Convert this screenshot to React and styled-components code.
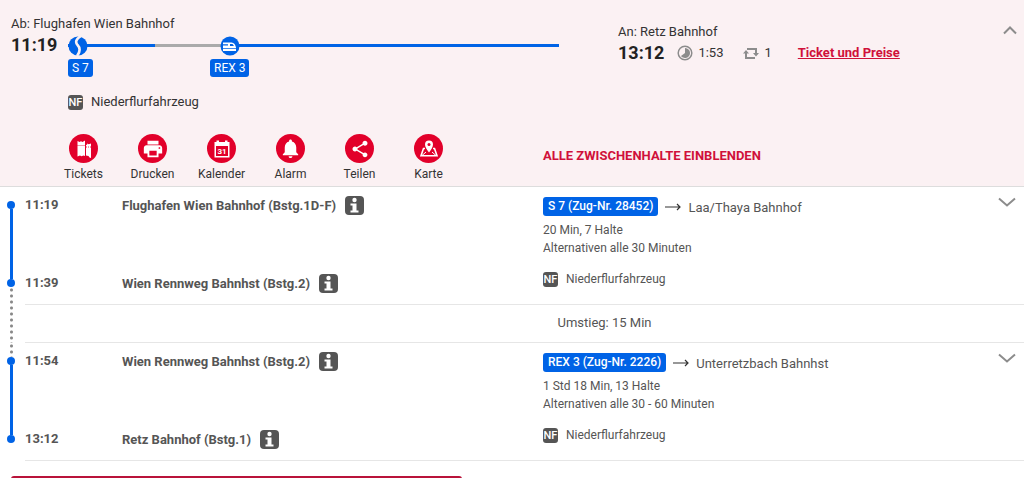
import { MdPrint, MdNotifications, MdShare } from 'react-icons/md'
import styled, { createGlobalStyle } from 'styled-components'

const actions = [
  { label: 'Tickets', icon: <TicketsIcon /> },
  { label: 'Drucken', icon: <MdPrint size={22} /> },
  { label: 'Kalender', icon: <CalendarIcon /> },
  { label: 'Alarm', icon: <MdNotifications size={23} /> },
  { label: 'Teilen', icon: <MdShare size={20} /> },
  { label: 'Karte', icon: <MapIcon /> },
]

const firstLeg = {
  stops: [
    { time: '11:19', name: 'Flughafen Wien Bahnhof (Bstg.1D-F)' },
    { time: '11:39', name: 'Wien Rennweg Bahnhst (Bstg.2)' },
  ],
  train: 'S 7 (Zug-Nr. 28452)',
  direction: 'Laa/Thaya Bahnhof',
  duration: '20 Min, 7 Halte',
  alternatives: 'Alternativen alle 30 Minuten',
}

const secondLeg = {
  stops: [
    { time: '11:54', name: 'Wien Rennweg Bahnhst (Bstg.2)' },
    { time: '13:12', name: 'Retz Bahnhof (Bstg.1)' },
  ],
  train: 'REX 3 (Zug-Nr. 2226)',
  direction: 'Unterretzbach Bahnhst',
  duration: '1 Std 18 Min, 13 Halte',
  alternatives: 'Alternativen alle 30 - 60 Minuten',
}

export default function App() {
  return (
    <>
      <GlobalStyle />
      <Summary>
        <Overview>
          <Departure>
            <Station>Ab: Flughafen Wien Bahnhof</Station>
            <Time>11:19</Time>
            <Track>
              <Ride $grow={87}>
                <Marker>
                  <SBahnIcon />
                  <Badge>S 7</Badge>
                </Marker>
              </Ride>
              <Change />
              <Ride $grow={349} $afterChange>
                <Marker $center>
                  <TrainIcon />
                  <Badge>REX 3</Badge>
                </Marker>
              </Ride>
            </Track>
            <SummaryNote>
              <LowFloor />
            </SummaryNote>
          </Departure>
          <Arrival>
            <span>An: Retz Bahnhof</span>
            <Facts>
              <Time>13:12</Time>
              <Fact><DurationIcon />1:53</Fact>
              <Fact $wide><ChangesIcon />1</Fact>
              <PriceLink href="#preise">Ticket und Preise</PriceLink>
            </Facts>
          </Arrival>
          <Toggle type="button" aria-label="Details ausblenden">
            <Chevron up />
          </Toggle>
        </Overview>
        <Tools>
          <ActionList>
            {actions.map(({ label, icon }) => (
              <Action key={label} type="button">
                <Round>{icon}</Round>
                {label}
              </Action>
            ))}
          </ActionList>
          <StopsButton type="button">ALLE ZWISCHENHALTE EINBLENDEN</StopsButton>
        </Tools>
      </Summary>
      <main>
        <Leg leg={firstLeg} hasChange />
        <Row>
          <Rail><Dots /></Rail>
          <Transfer>Umstieg: 15 Min</Transfer>
        </Row>
        <Leg leg={secondLeg} afterChange />
        <BuyButton type="button" aria-label="Ticket und Preise" />
      </main>
    </>
  )
}

function Leg({ leg, hasChange, afterChange }) {
  return (
    <Row>
      <Rail>
        <Lead>{afterChange && <Dots />}</Lead>
        <Dot />
        <Line />
        <Dot />
        <Tail>{hasChange && <Dots />}</Tail>
      </Rail>
      <LegBody>
        <Stops>
          {leg.stops.map((stop) => (
            <Stop key={stop.time}>
              <time>{stop.time}</time>
              <StopName>
                {stop.name}
                <InfoButton type="button" aria-label="Information">
                  <InfoIcon />
                </InfoButton>
              </StopName>
            </Stop>
          ))}
        </Stops>
        <Info>
          <Direction>
            <TrainBadge>{leg.train}</TrainBadge>
            <ArrowIcon />
            <Target>{leg.direction}</Target>
          </Direction>
          <p>{leg.duration}</p>
          <p>{leg.alternatives}</p>
          <LegNote>
            <LowFloor />
          </LegNote>
        </Info>
        <Toggle type="button" aria-label="Zwischenhalte einblenden">
          <Chevron />
        </Toggle>
      </LegBody>
    </Row>
  )
}

function LowFloor() {
  return (
    <Note>
      <Nf>NF</Nf>
      Niederflurfahrzeug
    </Note>
  )
}

function Chevron({ up }) {
  return (
    <svg width="18" height="10" viewBox="0 0 18 10" fill="none" stroke="#8c8c8c" strokeWidth="2">
      <path d={up ? 'M3 8.500l6-6 6 6' : 'M1 1.500l8 7 8-7'} />
    </svg>
  )
}

function SBahnIcon() {
  return (
    <svg width="20" height="20" viewBox="0 0 20 20">
      <circle cx="10" cy="10" r="9.500" fill="#0063e6" />
      <path d="M13 0C8 3 7 6 9.500 9C13 12.500 12 16 9 20" fill="none" stroke="#fbf1f3" strokeWidth="2.600" />
    </svg>
  )
}

function TrainIcon() {
  return (
    <svg width="20" height="20" viewBox="0 0 20 20">
      <circle cx="10" cy="10" r="9.500" fill="#0063e6" />
      <path d="M3 6.500h8.500c2.500 0 4 2.500 4.500 5v.7H3z" fill="#fff" />
      <path d="M3 13h13v2H3z" fill="#fff" />
      <path d="M3 8.300h5v1.200H3zM10 8h2.500l1.500 2h-4z" fill="#0063e6" />
    </svg>
  )
}

function DurationIcon() {
  return (
    <svg width="16" height="16" viewBox="0 0 16 16">
      <circle cx="8" cy="8" r="6.800" fill="none" stroke="#8c8c8c" strokeWidth="1.500" />
      <path d="M8 3a5 5 0 1 1-4 8l4-3z" fill="#8c8c8c" />
    </svg>
  )
}

function ChangesIcon() {
  return (
    <svg width="16" height="16" viewBox="0 0 16 16" fill="none" stroke="#8c8c8c" strokeWidth="2">
      <path d="M4 4h9v6M12 13H3V7" />
      <path d="M10 8h6l-3 3.500zM0 8.500h6L3 5z" fill="#8c8c8c" stroke="none" />
    </svg>
  )
}

function ArrowIcon() {
  return (
    <svg width="16" height="8" viewBox="0 0 16 8" fill="none" stroke="#333" strokeWidth="1.200">
      <path d="M0 4h15M12 1l3 3-3 3" />
    </svg>
  )
}

function InfoIcon() {
  return (
    <svg width="19" height="19" viewBox="0 0 19 19">
      <rect width="19" height="19" rx="4" fill="#555" />
      <circle cx="9.500" cy="4" r="2.200" fill="#fff" />
      <path d="M5.500 7.500h6v7h2v2h-8v-2h2v-5h-2z" fill="#fff" />
    </svg>
  )
}

function TicketsIcon() {
  return (
    <svg width="28" height="28" viewBox="0 0 28 28" fill="#fff">
      <path d="M7.500 6l2 1 1.500-.7 1.500.7L15 5.500V21l-1.500-.5-2 .8-1.500-.8-2.500 1z" />
      <path d="M16 10l1.200-.5V8.500l1.500.7 2.300-.7V23l-1.500-.5-1-1.500-2.500-.5z" />
      <path d="M7.500 10.500H15M16 12h5" stroke="#e2002a" strokeWidth=".8" strokeDasharray="1 1" />
    </svg>
  )
}

function CalendarIcon() {
  return (
    <svg width="28" height="28" viewBox="0 0 28 28">
      <path d="M6.500 7h2V5.500h2.500V7h6V5.500h2.500V7h2v15.500h-15z" fill="#fff" />
      <path d="M8 11h12v10H8z" fill="#e2002a" />
      <text x="14" y="19" textAnchor="middle" fontSize="8" fontWeight="700" fill="#fff">31</text>
    </svg>
  )
}

function MapIcon() {
  return (
    <svg width="28" height="28" viewBox="0 0 28 28">
      <path d="M10 13.500H8.500L6 20.800h16l-2.500-7.300H18" fill="none" stroke="#fff" strokeWidth="1.600" />
      <path d="M14 17.500c-2-3-4-5-4-8a4 4 0 0 1 8 0c0 3-2 5-4 8z" fill="#fff" />
      <path d="M7 20.500l4-3.500M21 20.500l-4-3.500" stroke="#fff" strokeWidth="1" />
      <circle cx="14" cy="9.500" r="1.500" fill="#e2002a" />
    </svg>
  )
}

const GlobalStyle = createGlobalStyle`
  * {
    box-sizing: border-box;
  }
  body {
    margin: 0;
    overflow: hidden;
    background: #fff;
    color: #333;
    font-family: Roboto, 'Liberation Sans', sans-serif;
    font-size: 13px;
    line-height: 18px;
  }
  button {
    padding: 0;
    border: 0;
    background: none;
    color: inherit;
    font: inherit;
    cursor: pointer;
  }
  p, ol {
    margin: 0;
    padding: 0;
    list-style: none;
  }
  svg {
    display: block;
    flex-shrink: 0;
  }
`

const Summary = styled.header`
  padding: 15px 0 3px 11px;
  background: #fbf1f3;
  border-bottom: 1px solid #ddd;
`

const Overview = styled.section`
  display: grid;
  grid-template-columns: 548fr 319fr 28px;
  column-gap: 59px;
`

const Departure = styled.div`
  display: grid;
  grid-template-columns: 57px 1fr;
`

const Station = styled.span`
  grid-column: 1 / -1;
`

const Time = styled.strong`
  font-size: 18px;
  font-weight: 700;
  line-height: 24px;
  color: #222;
`

const Track = styled.div`
  display: flex;
  padding-top: 3px;
`

const Ride = styled.div`
  flex: ${({ $grow }) => $grow} 1 0;
  min-width: 0;
  background: ${({ $afterChange }) =>
      $afterChange ? 'linear-gradient(90deg, #aaa 18px, #0063e6 18px)' : 'linear-gradient(#0063e6, #0063e6)'}
    0 8px / 100% 3px no-repeat;
`

const Change = styled.div`
  flex: 55 1 0;
  background: linear-gradient(#aaa, #aaa) 0 8px / 100% 3px no-repeat;
`

const Marker = styled.div`
  display: flex;
  flex-direction: column;
  align-items: ${({ $center }) => ($center ? 'center' : 'flex-start')};
  gap: 3px;
  width: fit-content;
`

const Badge = styled.span`
  padding: 0 4px;
  border-radius: 3px;
  background: #0063e6;
  color: #fff;
  font-size: 12px;
`

const TrainBadge = styled(Badge)`
  padding: 0 5px;
  font-weight: 500;
  line-height: 19px;
`

const SummaryNote = styled.div`
  grid-column: 2;
  padding-top: 16px;
`

const Note = styled.div`
  display: flex;
  align-items: center;
  gap: 8px;
`

const Nf = styled.span`
  width: 15px;
  height: 15px;
  border-radius: 3px;
  background: #555;
  color: #fff;
  font-size: 11px;
  font-weight: 500;
  line-height: 15px;
  text-align: center;
`

const Arrival = styled.div`
  display: flex;
  flex-direction: column;
  padding-top: 8px;
`

const Facts = styled.div`
  display: flex;
  align-items: center;
  white-space: nowrap;
`

const Fact = styled.span`
  display: flex;
  align-items: center;
  gap: 5px;
  margin-left: ${({ $wide }) => ($wide ? 20 : 13)}px;
`

const PriceLink = styled.a`
  margin-left: 26px;
  color: #d0103a;
  font-weight: 700;
`

const Toggle = styled.button`
  display: flex;
  justify-content: center;
  align-self: start;
  padding: 10px 5px;
`

const Tools = styled.section`
  display: grid;
  grid-template-columns: 532fr 481fr;
  padding-top: 23px;
`

const ActionList = styled.div`
  display: flex;
  padding-left: 38px;
`

const Action = styled.button`
  display: flex;
  flex-direction: column;
  align-items: center;
  gap: 2px;
  width: 69px;
  font-size: 12px;
`

const Round = styled.span`
  display: grid;
  place-items: center;
  width: 29px;
  height: 29px;
  border-radius: 50%;
  background: #e2002a;
  color: #fff;
`

const StopsButton = styled.button`
  align-self: start;
  justify-self: start;
  padding-top: 13px;
  color: #d0103a;
  font-weight: 700;
`

const Row = styled.article`
  display: grid;
  grid-template-columns: 25px 1fr;
  color: #555;
`

const Rail = styled.div`
  display: flex;
  flex-direction: column;
  align-items: center;
  padding-right: 3px;
`

const Lead = styled.div`
  height: 14px;
`

const Tail = styled.div`
  height: 18px;
`

const Dot = styled.span`
  width: 8px;
  height: 8px;
  border-radius: 50%;
  background: #0063e6;
`

const Line = styled.span`
  flex: 1;
  width: 3px;
  background: #0063e6;
`

const Dots = styled.div`
  width: 3px;
  height: 100%;
  background: radial-gradient(circle, #888 1px, transparent 2px) 0 0 / 3px 6px repeat-y;
`

const LegBody = styled.div`
  display: grid;
  grid-template-columns: 518fr 446fr 35px;
  padding-top: 9px;
  border-bottom: 1px solid #e6e6e6;

  ${Toggle} {
    padding: 1px 8px 8px;
  }
`

const Stops = styled.ol`
  display: flex;
  flex-direction: column;
  justify-content: space-between;
  padding-bottom: 11px;
`

const Stop = styled.li`
  display: grid;
  grid-template-columns: 97px 1fr;
  font-weight: 700;
`

const StopName = styled.span`
  display: flex;
  align-items: center;
  gap: 9px;
`

const InfoButton = styled.button`
  display: block;
`

const Info = styled.div`
  padding-bottom: 16px;
  font-size: 12px;
`

const Direction = styled.div`
  display: flex;
  align-items: center;
  gap: 7px;
  padding-bottom: 4px;
`

const Target = styled.span`
  padding-top: 3px;
  font-size: 13px;
`

const LegNote = styled.div`
  padding-top: 13px;
`

const Transfer = styled.div`
  display: grid;
  align-items: center;
  padding: 9px 0 10px 53.3%;
  border-bottom: 1px solid #e6e6e6;
`

const BuyButton = styled.button`
  width: 44%;
  height: 36px;
  margin: 15px 11px;
  border-radius: 3px;
  background: #b9133a;
`
